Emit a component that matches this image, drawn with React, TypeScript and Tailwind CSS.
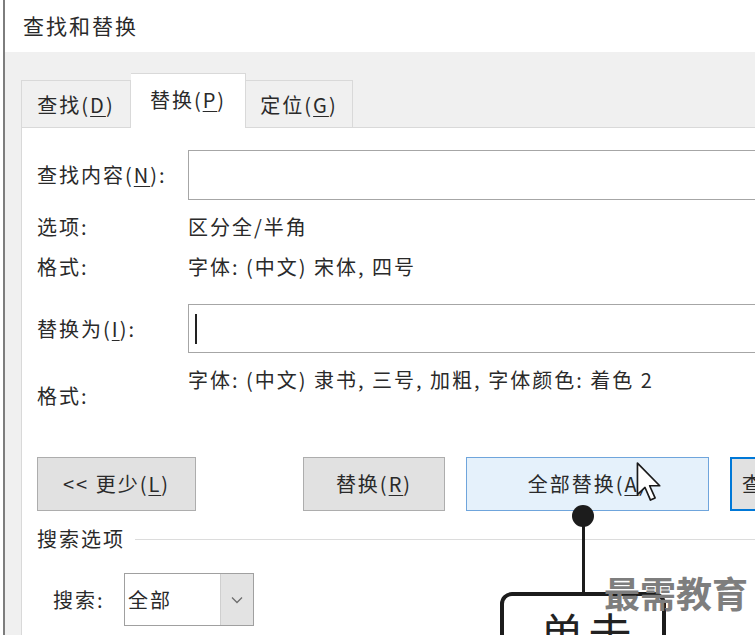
function Key({ children }: { children: string }) {
  return <span className="underline decoration-1 underline-offset-[3px]">{children}</span>
}

function App() {
  return (
    <div className="relative flex h-[635px] w-[755px] overflow-hidden bg-white font-['Noto_Sans_CJK_SC',sans-serif] text-[20px] tracking-[2px] text-[#2a2a2a]">
      <div className="w-[3px] shrink-0 bg-white" />
      <div className="w-[2px] shrink-0 bg-[#7d7d7d]" />
      <div className="flex w-[820px] shrink-0 flex-col">
        <div className="flex h-[52px] shrink-0 items-center pl-[18px] text-[21px]">查找和替换</div>
        <div className="flex flex-1 flex-col bg-[#f0f0f0] pl-4 pt-[21px]">
          {/* tabs */}
          <div className="flex h-[55px] items-end">
            <div className="flex h-[48px] w-[110px] shrink-0 items-center justify-center border border-b-0 border-[#d9d9d9]">
              查找(<Key>D</Key>)
            </div>
            <div className="relative z-10 flex h-[55px] w-[115px] shrink-0 items-center justify-center border border-b-0 border-l-0 border-[#d9d9d9] bg-white pb-[2px]">
              替换(<Key>P</Key>)
            </div>
            <div className="flex h-[48px] w-[107px] shrink-0 items-center justify-center border border-b-0 border-l-0 border-[#d9d9d9]">
              定位(<Key>G</Key>)
            </div>
          </div>

          <div className="-mt-px flex flex-1 flex-col border-l border-t border-[#d9d9d9] bg-white pl-[15px] pt-[22px]">
            <div className="grid grid-cols-[151px_1fr] items-center">
              <div>
                查找内容(<Key>N</Key>):
              </div>
              <div className="h-[50px] border border-[#a6a6a6] bg-white" />
            </div>

            <div className="mt-[7px] grid grid-cols-[151px_1fr] leading-[40px]">
              <div>选项:</div>
              <div>区分全/半角</div>
              <div>格式:</div>
              <div>字体: (中文) 宋体, 四号</div>
            </div>

            <div className="mt-[17px] grid grid-cols-[151px_1fr] items-center">
              <div>
                替换为(<Key>I</Key>):
              </div>
              <div className="flex h-[49px] items-center border border-[#a6a6a6] bg-white pl-[6px]">
                <span className="h-[30px] w-[2px] bg-[#222]" />
              </div>
            </div>

            <div className="mt-[13px] grid grid-cols-[151px_1fr] leading-[27px]">
              <div className="pt-[16px]">格式:</div>
              <div className="whitespace-nowrap">字体: (中文) 隶书, 三号, 加粗, 字体颜色: 着色 2</div>
            </div>

            {/* buttons */}
            <div className="mt-[48px] flex whitespace-nowrap">
              <div className="flex h-[54px] w-[159px] shrink-0 items-center justify-center border border-[#adadad] bg-[#e1e1e1]">
                {'<< 更少('}
                <Key>L</Key>)
              </div>
              <div className="ml-[107px] flex h-[54px] w-[142px] shrink-0 items-center justify-center border border-[#adadad] bg-[#e1e1e1]">
                替换(<Key>R</Key>)
              </div>
              <div className="ml-[21px] flex h-[54px] w-[243px] shrink-0 items-center justify-center border border-[#6fa5dc] bg-[#e5f1fb]">
                全部替换(<Key>A</Key>)
              </div>
              <div className="ml-[21px] flex h-[54px] w-[170px] shrink-0 items-center border-2 border-[#0078d7] bg-[#e1e1e1] pl-[10px]">
                查找下一处(<Key>F</Key>)
              </div>
            </div>

            <div className="mt-[16px] flex items-center leading-[24px]">
              <span>搜索选项</span>
              <span className="ml-[10px] h-px flex-1 bg-[#dcdcdc]" />
            </div>

            <div className="mt-[22px] flex items-center pl-[16px]">
              <span className="w-[71px] shrink-0">搜索:</span>
              <div className="flex h-[53px] w-[130px] shrink-0 border border-[#a0a0a0] bg-white">
                <div className="flex flex-1 items-center pl-[3px]">全部</div>
                <div className="flex w-[33px] items-center justify-center border-l border-[#cfcfcf] bg-[#e3e3e3]">
                  <svg width="12" height="8" viewBox="0 0 12 8" fill="none" stroke="#6d6d6d" strokeWidth="1.3">
                    <path d="M1 1.5l5 5 5-5" />
                  </svg>
                </div>
              </div>
            </div>
          </div>
        </div>
      </div>

      {/* callout */}
      <div className="absolute left-[572px] top-[505px] h-[22px] w-[22px] rounded-full bg-[#1c1c1c]" />
      <div className="absolute left-[582px] top-[515px] h-[80px] w-[3px] bg-[#1c1c1c]" />
      <div className="absolute left-[500px] top-[592px] h-[90px] w-[166px] rounded-[12px] border-4 border-[#1c1c1c] bg-white pl-[36px] pt-[14px] text-[44px] leading-none tracking-[4px] text-[#222]">
        单击
      </div>

      {/* mouse pointer */}
      <svg
        className="absolute left-[635px] top-[461px]"
        width="28"
        height="42"
        viewBox="0 0 13 20"
        fill="#fff"
        stroke="#1a1a1a"
        strokeWidth="0.8"
        strokeLinejoin="round"
      >
        <path d="M1 1 L1 16 L4.6 12.6 L7.2 18.6 L9.4 17.6 L6.8 11.8 L11.6 11.8 Z" />
      </svg>

      <div className="absolute left-[604px] top-[574px] text-[36px] font-bold leading-none tracking-normal text-[#7e7e7e]">
        最需教育
      </div>
    </div>
  )
}

export default App
